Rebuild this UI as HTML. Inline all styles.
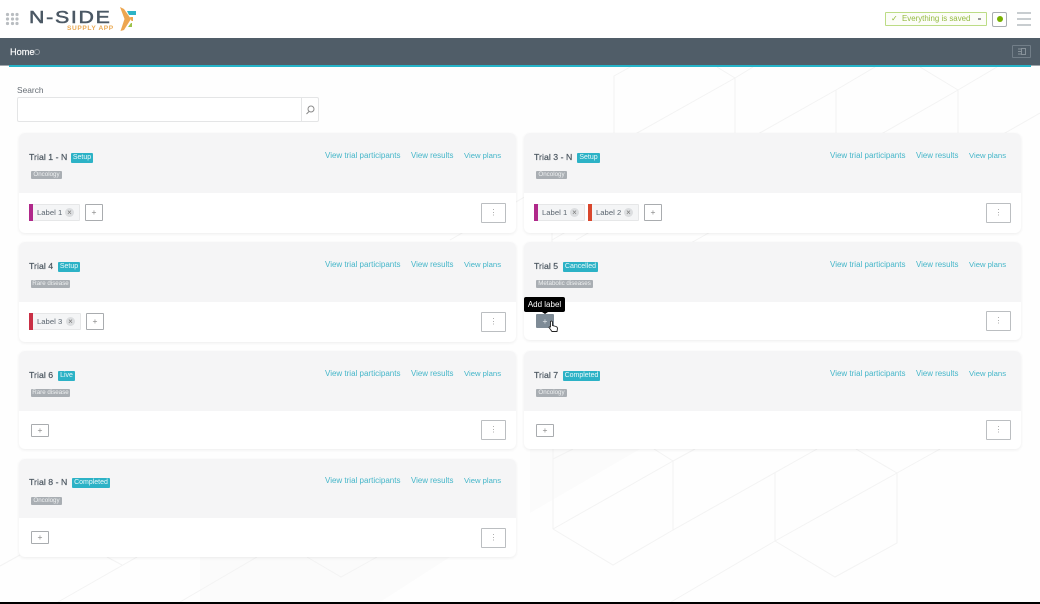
<!DOCTYPE html>
<html><head><meta charset="utf-8"><style>
*{box-sizing:border-box}
html{background:#fff}
html,body{margin:0;padding:0;width:1040px;height:604px;overflow:hidden;font-family:"Liberation Sans",sans-serif}
body{background:#fefefe;filter:blur(.3px)}
div,span,a{position:absolute;white-space:nowrap}
.card{background:#fff;border-radius:6px;box-shadow:0 1px 3px rgba(0,0,0,.07);left:19px;width:497px;overflow:hidden}
.card.r{left:524px}
.head{left:0;top:0;width:497px;background:#f5f5f6}
.t{left:10px;font-size:8.7px;line-height:12px;color:#4c5761;-webkit-text-stroke:.2px #4c5761;letter-spacing:.05px}
.b{background:#2cb2c6;color:#e8f8fa;font-size:7px;line-height:10.5px;height:10px;border-radius:1px;text-align:center}
.g{left:12px;background:#a9aeb3;color:#eef0f1;font-size:6.2px;line-height:8.5px;height:8px;border-radius:1px;text-align:center}
.l{color:#45b6c9;font-size:8px;line-height:10px}
.l.p{font-size:7.7px}
.l.s{font-size:7.9px}
.more{left:462px;width:25px;height:20px;border:1px solid #bbbec1;border-radius:1px;background:#fff;color:#a0a0a0;font-size:8px;line-height:17px;text-align:center}
.plus{width:18px;height:13px;border:1px solid #a9acaf;border-radius:1px;background:#fff;color:#888;font-size:8.5px;line-height:11px;text-align:center}
.chip{height:17px;background:#f4f5f6;border:1px solid #e6e7e8;border-radius:1px}
.bar{left:-1px;top:-1px;width:3.5px;height:17px}
.lab{left:7px;top:3px;font-size:7.7px;line-height:10px;color:#5c6670}
.x{left:35px;top:3px;width:9px;height:9px;border-radius:50%;background:#dcdee0;color:#777;font-size:8px;line-height:9px;text-align:center}
</style></head><body>

<svg style="position:absolute;left:0;top:0" width="1040" height="604" fill="none">
<polygon points="200,557 450,557 377,604 200,604" fill="#fbfbfb"/>
<polygon points="530,449 640,449 530,513" fill="#fbfbfb"/>
<g stroke="#f3f3f3" stroke-width="1">
<path d="M614,146V76L632,66M735,148V78L717,67M735,78L753,67M735,78L614,146L675,182L735,148M836,90L875,67M836,90V160M836,90L632,205M958,90L997,67M958,90L920,67M958,90V160M958,90L836,160L897,196L958,160M1040,113L958,160M735,148V218M836,160V230M735,218L675,252M450,240L632,135M552,230V245M552,240L576,226M576,240L600,226"/>
<path d="M553,529V449M553,459L573,449M673,461L654,449M673,461L695,449M553,529L613,565L673,530M553,529L673,461V530L817,449M775,541V473M775,541L835,577L897,543V473M775,541L897,473L940,449M897,473L856,449M775,541L671,602"/>
<path d="M20,555L0,566M107,557L122,565M137,557L58,602M257,557L180,602M307,557L341,577L377,557"/>
</g></svg>

<!-- top bar -->
<div style="left:0;top:0;width:1040px;height:38px;background:#fff"></div>
<svg style="position:absolute;left:0;top:0" width="150" height="38">
<g fill="#b9bdc1"><circle cx="7.5" cy="14.5" r="1.6"/><circle cx="12.5" cy="14.5" r="1.6"/><circle cx="17" cy="14.5" r="1.6"/><circle cx="7.5" cy="19" r="1.6"/><circle cx="12.5" cy="19" r="1.6"/><circle cx="17" cy="19" r="1.6"/><circle cx="7.5" cy="23.5" r="1.6"/><circle cx="12.5" cy="23.5" r="1.6"/><circle cx="17" cy="23.5" r="1.6"/></g>
<path d="M120,7L124,9L131,19L124,30L120.5,31L124.5,19Z" fill="#eda650"/>
<path d="M127,11H136V15H129Z" fill="#2db3c6"/>
<path d="M130,17H133V21H131.5Z" fill="#eda650"/>
<path d="M128,27L131,23H132V27Z" fill="#9cc24a"/>
</svg>
<div style="left:29px;top:7.5px;font-size:17.5px;line-height:18px;color:#4b5864;-webkit-text-stroke:.5px #4b5864;letter-spacing:1.4px;transform-origin:0 0;transform:scaleX(1.22)">N-SIDE</div>
<div style="left:67px;top:25px;font-size:6.6px;line-height:8px;font-weight:bold;color:#eba952;letter-spacing:.6px">SUPPLY APP</div>

<div style="left:885px;top:12px;width:102px;height:14px;border:1px solid #bcdc85;background:#fcfdf8;border-radius:1px"></div>
<div style="left:891px;top:14px;font-size:8px;line-height:10px;color:#8db836">&#10003;</div>
<div style="left:902px;top:14px;font-size:7.9px;line-height:10px;color:#94bb42">Everything is saved</div>
<div style="left:978px;top:18px;width:3px;height:2px;background:#999"></div>
<div style="left:992px;top:12px;width:15px;height:15px;border:1px solid #a9adb1;border-radius:2px;background:#fff"></div>
<div style="left:996.5px;top:16px;width:6px;height:6px;border-radius:50%;background:#78b000"></div>
<div style="left:1017px;top:12px;width:14px;height:2px;background:#c8cdd0"></div>
<div style="left:1017px;top:18px;width:14px;height:2px;background:#c8cdd0"></div>
<div style="left:1017px;top:24px;width:14px;height:2px;background:#c8cdd0"></div>

<!-- nav -->
<div style="left:0;top:38px;width:1040px;height:27px;background:#505d68"></div>
<div style="left:0;top:65px;width:9px;height:1px;background:#a0a6ab"></div>
<div style="left:1031px;top:65px;width:9px;height:1px;background:#a0a6ab"></div>
<div style="left:9px;top:65px;width:1022px;height:2px;background:#25b3c8"></div>
<div style="left:10px;top:46px;font-size:9.2px;line-height:12px;color:#fff;-webkit-text-stroke:.15px #fff">Home</div>
<div style="left:33.5px;top:49px;width:6px;height:6px;border:1px solid #939ba2;border-radius:50%"></div>
<div style="left:1012px;top:45px;width:19px;height:13px;border:1px solid #727e88;border-radius:1px"></div>
<svg style="position:absolute;left:1018px;top:48px" width="8" height="7" fill="none" stroke="#88929a" stroke-width="1"><path d="M0,1H3M0,3.5H3M0,6H3"/><rect x="3.5" y=".5" width="4" height="6"/></svg>

<!-- search -->
<div style="left:17px;top:85px;font-size:8.4px;line-height:10px;color:#666d74">Search</div>
<div style="left:17px;top:97px;width:302px;height:25px;border:1px solid #e4e5e6;border-radius:2px;background:#fff"></div>
<div style="left:301px;top:98px;width:1px;height:23px;background:#e4e5e6"></div>
<svg style="position:absolute;left:304px;top:104px" width="12" height="12" fill="none" stroke="#8a8a8a" stroke-width="1"><circle cx="7" cy="5" r="3"/><path d="M5,7.5L2.5,10"/></svg>

<!-- Card 1 -->
<div class="card" style="top:133px;height:100px"><div class="head" style="height:60px"></div>
<div class="t" style="top:18px">Trial 1 - N</div><div class="b" style="left:52px;top:20px;width:22px">Setup</div><div class="g" style="top:38px;width:31px">Oncology</div>
<a class="l" style="left:306px;top:18px">View trial participants</a><a class="l s" style="left:392px;top:18px">View results</a><a class="l p" style="left:445px;top:18px">View plans</a>
<div class="chip" style="left:10px;top:71px;width:51px"><div class="bar" style="background:#b0288a"></div><span class="lab">Label 1</span><span class="x">×</span></div>
<div class="plus" style="left:66px;top:71px;height:17px;line-height:15px">+</div>
<div class="more" style="top:70px">⋮</div></div>

<!-- Card 3 -->
<div class="card r" style="top:133px;height:100px"><div class="head" style="height:60px"></div>
<div class="t" style="top:18px">Trial 3 - N</div><div class="b" style="left:53px;top:20px;width:23px">Setup</div><div class="g" style="top:38px;width:31px">Oncology</div>
<a class="l" style="left:306px;top:18px">View trial participants</a><a class="l s" style="left:392px;top:18px">View results</a><a class="l p" style="left:445px;top:18px">View plans</a>
<div class="chip" style="left:10px;top:71px;width:51px"><div class="bar" style="background:#b0288a"></div><span class="lab">Label 1</span><span class="x">×</span></div>
<div class="chip" style="left:64px;top:71px;width:51px"><div class="bar" style="background:#d9462c"></div><span class="lab">Label 2</span><span class="x">×</span></div>
<div class="plus" style="left:120px;top:71px;height:17px;line-height:15px">+</div>
<div class="more" style="top:70px">⋮</div></div>

<!-- Card 4 -->
<div class="card" style="top:242px;height:100px"><div class="head" style="height:60px"></div>
<div class="t" style="top:18px">Trial 4</div><div class="b" style="left:39px;top:20px;width:22px">Setup</div><div class="g" style="top:38px;width:39px">Rare disease</div>
<a class="l" style="left:306px;top:18px">View trial participants</a><a class="l s" style="left:392px;top:18px">View results</a><a class="l p" style="left:445px;top:18px">View plans</a>
<div class="chip" style="left:10px;top:71px;width:52px"><div class="bar" style="background:#c92f45"></div><span class="lab">Label 3</span><span class="x" style="left:36px">×</span></div>
<div class="plus" style="left:67px;top:71px;height:17px;line-height:15px">+</div>
<div class="more" style="top:70px">⋮</div></div>

<!-- Card 5 -->
<div class="card r" style="top:242px;height:98px"><div class="head" style="height:60px"></div>
<div class="t" style="top:18px">Trial 5</div><div class="b" style="left:39px;top:20px;width:35px">Cancelled</div><div class="g" style="top:38px;width:57px">Metabolic diseases</div>
<a class="l" style="left:306px;top:18px">View trial participants</a><a class="l s" style="left:392px;top:18px">View results</a><a class="l p" style="left:445px;top:18px">View plans</a>
<div class="plus" style="left:12px;top:72px;height:14px;background:#7e8b96;border-color:#7e8b96;color:#e4e8ea;line-height:12px">+</div>
<div class="more" style="top:69px">⋮</div></div>

<!-- Card 6 -->
<div class="card" style="top:351px;height:98px"><div class="head" style="height:60px"></div>
<div class="t" style="top:18px">Trial 6</div><div class="b" style="left:39px;top:20px;width:17px">Live</div><div class="g" style="top:38px;width:39px">Rare disease</div>
<a class="l" style="left:306px;top:18px">View trial participants</a><a class="l s" style="left:392px;top:18px">View results</a><a class="l p" style="left:445px;top:18px">View plans</a>
<div class="plus" style="left:12px;top:73px">+</div>
<div class="more" style="top:69px">⋮</div></div>

<!-- Card 7 -->
<div class="card r" style="top:351px;height:98px"><div class="head" style="height:60px"></div>
<div class="t" style="top:18px">Trial 7</div><div class="b" style="left:39px;top:20px;width:37px">Completed</div><div class="g" style="top:38px;width:31px">Oncology</div>
<a class="l" style="left:306px;top:18px">View trial participants</a><a class="l s" style="left:392px;top:18px">View results</a><a class="l p" style="left:445px;top:18px">View plans</a>
<div class="plus" style="left:12px;top:73px">+</div>
<div class="more" style="top:69px">⋮</div></div>

<!-- Card 8 -->
<div class="card" style="top:459px;height:98px"><div class="head" style="height:59px"></div>
<div class="t" style="top:17px">Trial 8 - N</div><div class="b" style="left:53px;top:19px;width:38px">Completed</div><div class="g" style="top:38px;width:31px">Oncology</div>
<a class="l" style="left:306px;top:17px">View trial participants</a><a class="l s" style="left:392px;top:17px">View results</a><a class="l p" style="left:445px;top:17px">View plans</a>
<div class="plus" style="left:12px;top:72px">+</div>
<div class="more" style="top:69px">⋮</div></div>

<!-- Tooltip -->
<div style="left:524px;top:297px;width:41px;height:15px;background:#000;border-radius:2px;color:#fff;font-size:8px;line-height:15px;text-align:center">Add label</div>
<div style="left:542px;top:312px;width:0;height:0;border-left:3px solid transparent;border-right:3px solid transparent;border-top:2px solid #000"></div>
<!-- Cursor -->
<svg style="position:absolute;left:548px;top:320px" width="11" height="13"><path d="M2.5,1.5Q4,0.5 4.5,2V5.5L8,6.5Q9.5,7 9.5,8.5L9,11.5H4L1,7.5Q1,6.5 2.5,7Z" fill="#fff" stroke="#222" stroke-width=".9"/></svg>

<div style="left:0;top:602px;width:1040px;height:2px;background:#000"></div>
</body></html>
